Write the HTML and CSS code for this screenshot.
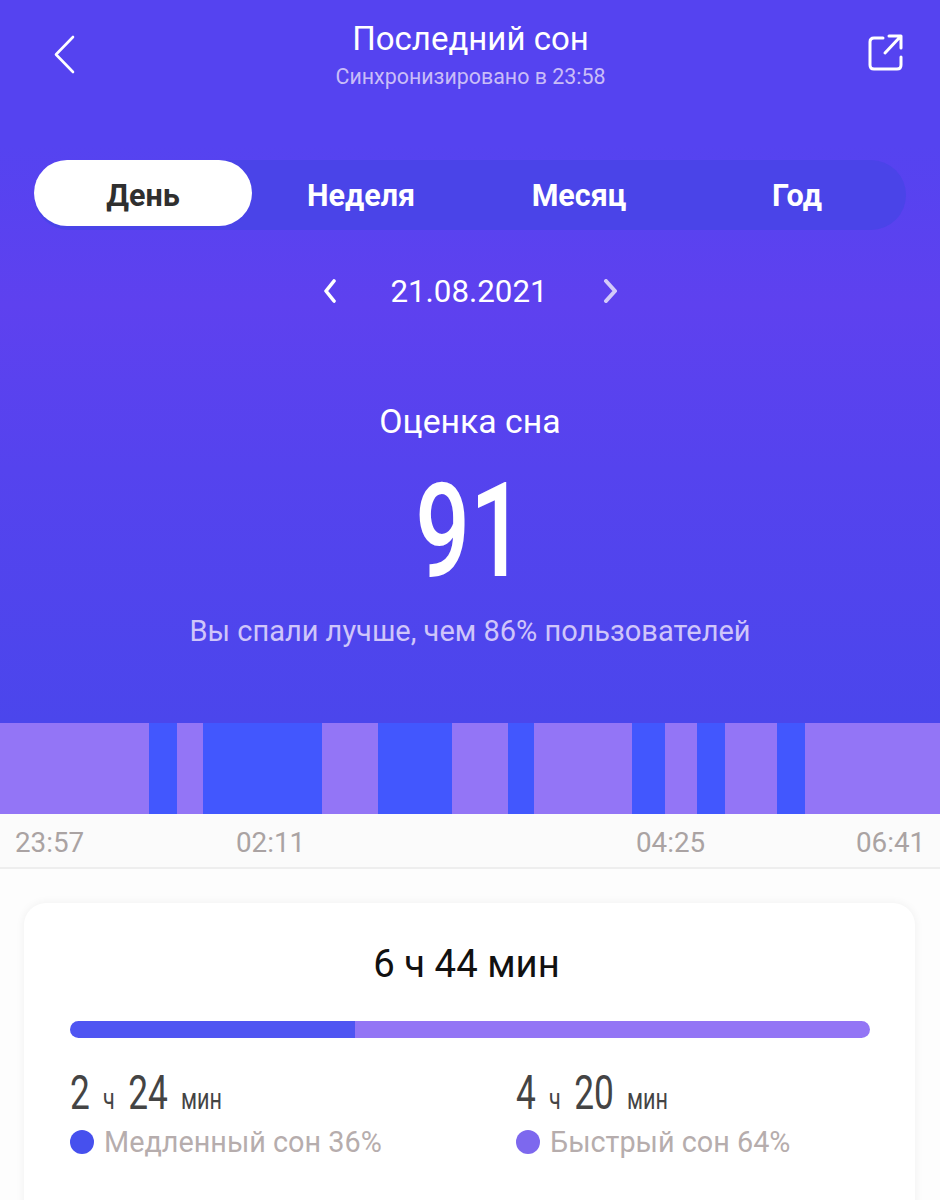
FILE: index.html
```html
<!DOCTYPE html>
<html lang="ru">
<head>
    <meta charset="UTF-8">
    <title>Последний сон</title>
    <link rel="stylesheet" href="styles.css">
</head>
<body>
    <div class="hero">
        <header class="topbar">
            <svg class="icon-back" width="24" height="40" viewBox="0 0 24 40"><path d="M21 3 L4 20.5 L21 38" fill="none" stroke="#fff" stroke-width="2.6" stroke-linecap="round" stroke-linejoin="round"/></svg>
            <div class="topbar-title">
                <h1>Последний сон</h1>
                <p>Синхронизировано в 23:58</p>
            </div>
            <svg class="icon-share" width="38" height="38" viewBox="0 0 38 38"><path d="M17 5 H8 Q4 5 4 9 V32 Q4 36 8 36 H31 Q35 36 35 32 V24" fill="none" stroke="#fff" stroke-width="3" stroke-linecap="round"/><path d="M19 20 L34 4 M23 3 H35 V15" fill="none" stroke="#fff" stroke-width="3" stroke-linecap="round" stroke-linejoin="round"/></svg>
        </header>

        <nav class="tabs">
            <span class="tab tab-active">День</span>
            <span class="tab">Неделя</span>
            <span class="tab">Месяц</span>
            <span class="tab">Год</span>
        </nav>

        <div class="date-row">
            <svg width="14" height="24" viewBox="0 0 14 24"><path d="M11 2 L3 12 L11 22" fill="none" stroke="#fff" stroke-width="3.6" stroke-linecap="round" stroke-linejoin="round"/></svg>
            <span class="date">21.08.2021</span>
            <svg width="16" height="24" viewBox="0 0 16 24"><path d="M5 2 L14 12 L5 22" fill="none" stroke="#d3caf9" stroke-width="4" stroke-linecap="round" stroke-linejoin="round"/></svg>
        </div>

        <div class="score">
            <div class="score-label">Оценка сна</div>
            <div class="score-value">91</div>
            <div class="score-note">Вы спали лучше, чем 86% пользователей</div>
        </div>
    </div>

    <div class="phases">
        <div class="phase light" style="width:149px"></div>
        <div class="phase deep" style="width:28px"></div>
        <div class="phase light" style="width:26px"></div>
        <div class="phase deep" style="width:119px"></div>
        <div class="phase light" style="width:56px"></div>
        <div class="phase deep" style="width:74px"></div>
        <div class="phase light" style="width:56px"></div>
        <div class="phase deep" style="width:26px"></div>
        <div class="phase light" style="width:98px"></div>
        <div class="phase deep" style="width:33px"></div>
        <div class="phase light" style="width:32px"></div>
        <div class="phase deep" style="width:28px"></div>
        <div class="phase light" style="width:52px"></div>
        <div class="phase deep" style="width:28px"></div>
        <div class="phase light" style="width:135px"></div>
    </div>

    <div class="times">
        <span>23:57</span>
        <span>02:11</span>
        <span>04:25</span>
        <span>06:41</span>
    </div>

    <section class="card">
        <div class="total">6 ч 44 мин</div>
        <div class="bar">
            <div class="bar-deep" style="width:285px"></div>
            <div class="bar-light"></div>
        </div>
        <div class="stats">
            <div class="stat">
                <div class="stat-value"><b>2</b> ч <b>24</b> мин</div>
                <div class="stat-label"><i class="dot dot-deep"></i>Медленный сон 36%</div>
            </div>
            <div class="stat">
                <div class="stat-value"><b>4</b> ч <b>20</b> мин</div>
                <div class="stat-label"><i class="dot dot-light"></i>Быстрый сон 64%</div>
            </div>
        </div>
    </section>
</body>
</html>
```

FILE: styles.css
```css
html, body {
    height: 1200px;
    overflow: hidden;
}

body {
    margin: 0;
    font-family: Roboto, "Noto Sans", sans-serif;
    background-color: #fdfdfd;
}

.hero {
    height: 723px;
    overflow: hidden;
    box-sizing: border-box;
    padding-top: 18px;
    background: linear-gradient(#5543f0 0%, #5543f0 20%, #5e41ef 42%, #5543ee 65%, #4b46ec 100%);
    color: #fff;
}

.topbar {
    display: flex;
    justify-content: space-between;
    align-items: flex-start;
    height: 122px;
    padding: 0 36px 0 52px;
}

.icon-back {
    margin-top: 16px;
}

.icon-share {
    margin-top: 15px;
}

.topbar-title {
    text-align: center;
    margin-left: -1px;
}

.topbar-title h1 {
    margin: 0;
    font-size: 33px;
    font-weight: 400;
    line-height: 42px;
}

.topbar-title p {
    margin: 3px 0 0;
    font-size: 21.4px;
    line-height: 28px;
    color: #c9bdf8;
}

.tabs {
    display: flex;
    width: 872px;
    height: 70px;
    margin: 20px 0 0 34px;
    border-radius: 35px;
    background-color: #4a44e8;
}

.tab {
    display: flex;
    align-items: center;
    justify-content: center;
    box-sizing: border-box;
    flex: 0 0 218px;
    height: 66px;
    padding-top: 4px;
    border-radius: 33px;
    font-size: 30.5px;
    font-weight: 700;
}

.tab-active {
    background-color: #fff;
    color: #2f2f2f;
}

.date-row {
    display: flex;
    align-items: center;
    justify-content: center;
    gap: 53px;
    height: 40px;
    margin-top: 41px;
}

.date {
    font-size: 31.3px;
}

.score {
    margin-top: 91px;
    text-align: center;
}

.score-label {
    font-size: 33.8px;
    line-height: 40px;
}

.score-value {
    font-size: 132px;
    font-weight: 500;
    line-height: 120px;
    margin-top: 29px;
    transform: scaleX(.73);
}

.score-note {
    margin-top: 22px;
    font-size: 29px;
    line-height: 36px;
    color: #cfc5fa;
}

.phases {
    display: flex;
    height: 91px;
}

.phase.light {
    background-color: #9375f6;
}

.phase.deep {
    background-color: #4257fe;
}

.times {
    display: grid;
    grid-template-columns: 221px 400px 220px auto;
    box-sizing: content-box;
    height: 49px;
    padding: 4px 0 0 15px;
    align-items: center;
    border-bottom: 2px solid #eeeeee;
    background-color: #fbfbfb;
    font-size: 27.8px;
    color: #aaa3a3;
}

.card {
    box-sizing: border-box;
    width: 891px;
    height: 340px;
    margin: 34px 0 0 24px;
    padding: 38px 45px 0 46px;
    border-radius: 22px;
    background-color: #fff;
    box-shadow: 0 0 10px rgba(0, 0, 0, .06);
}

.total {
    font-size: 38.3px;
    line-height: 46px;
    text-align: center;
    color: #111;
    margin-right: 7px;
}

.bar {
    display: flex;
    height: 17px;
    margin-top: 34px;
    border-radius: 9px;
    overflow: hidden;
}

.bar-deep {
    background-color: #4f55f2;
}

.bar-light {
    flex: 1;
    background-color: #9375f5;
}

.stats {
    display: grid;
    grid-template-columns: 446px auto;
    margin-top: 28px;
}

/* numbers in the original are set in a tall condensed face */
.stat-value {
    font-size: 30px;
    line-height: 54px;
    color: #444;
    word-spacing: 11px;
    white-space: nowrap;
    transform: scaleX(.72);
    transform-origin: left center;
}

.stat-value b {
    font-size: 49px;
    font-weight: 400;
}

.stat-label {
    display: flex;
    align-items: center;
    margin-top: -2px;
    font-size: 28.8px;
    line-height: 36px;
    color: #b6adad;
}

.dot {
    width: 24px;
    height: 24px;
    margin-right: 10px;
    border-radius: 50%;
}

.dot-deep {
    background-color: #4650ee;
}

.dot-light {
    background-color: #7d68ee;
}
```
